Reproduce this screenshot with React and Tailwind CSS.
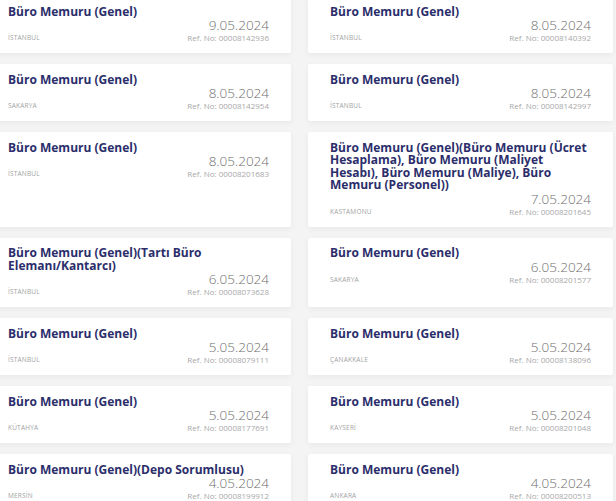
import React from 'react';

const ILANLAR = [
    { title: 'Büro Memuru (Genel)', city: 'İstanbul', date: '9.05.2024', ref: '00008142936' },
    { title: 'Büro Memuru (Genel)', city: 'İstanbul', date: '8.05.2024', ref: '00008140392' },
    { title: 'Büro Memuru (Genel)', city: 'Sakarya', date: '8.05.2024', ref: '00008142954' },
    { title: 'Büro Memuru (Genel)', city: 'İstanbul', date: '8.05.2024', ref: '00008142997' },
    { title: 'Büro Memuru (Genel)', city: 'İstanbul', date: '8.05.2024', ref: '00008201683' },
    { title: 'Büro Memuru (Genel)(Büro Memuru (Ücret Hesaplama), Büro Memuru (Maliyet Hesabı), Büro Memuru (Maliye), Büro Memuru (Personel))', city: 'Kastamonu', date: '7.05.2024', ref: '00008201645' },
    { title: 'Büro Memuru (Genel)(Tartı Büro Elemanı/Kantarcı)', city: 'İstanbul', date: '6.05.2024', ref: '00008073628' },
    { title: 'Büro Memuru (Genel)', city: 'Sakarya', date: '6.05.2024', ref: '00008201577' },
    { title: 'Büro Memuru (Genel)', city: 'İstanbul', date: '5.05.2024', ref: '00008079111' },
    { title: 'Büro Memuru (Genel)', city: 'Çanakkale', date: '5.05.2024', ref: '00008138096' },
    { title: 'Büro Memuru (Genel)', city: 'Kütahya', date: '5.05.2024', ref: '00008177691' },
    { title: 'Büro Memuru (Genel)', city: 'Kayseri', date: '5.05.2024', ref: '00008201048' },
    { title: 'Büro Memuru (Genel)(Depo Sorumlusu)', city: 'Mersin', date: '4.05.2024', ref: '00008199912' },
    { title: 'Büro Memuru (Genel)', city: 'Ankara', date: '4.05.2024', ref: '00008200513' },
];

function IlanCard({ ilan }) {
    return (
        <div className="bg-white rounded-[2px] shadow-[0_2px_6px_rgba(0,0,0,0.05)] pt-[9.5px] pb-[9px] px-[22px]">
            <h3 className="text-[12px] font-bold leading-[12.5px] text-[#2b2e6b]">{ilan.title}</h3>
            <div className="flex items-end justify-between">
                <span className="text-[6.5px] leading-[12px] uppercase text-[#a3a3a3] tracking-[0.2px]">{ilan.city.toLocaleUpperCase('tr-TR')}</span>
                <div className="text-right">
                    <p className="text-[13.5px] font-light leading-[14px] text-[#6e6e6e]">{ilan.date}</p>
                    <p className="text-[8px] leading-[12px] text-[#a8a8a8]">Ref. No: {ilan.ref}</p>
                </div>
            </div>
        </div>
    );
}

export default function App() {
    return (
        <div className="w-[616px] h-[501px] overflow-hidden bg-[#f4f4f4]" style={{ fontFamily: '"Open Sans", "Noto Sans", sans-serif' }}>
            <div className="-ml-[14px] -mt-[4px] grid grid-cols-[305px_305px] gap-x-[17px] gap-y-[11px]">
                {ILANLAR.map((ilan, i) => <IlanCard key={i} ilan={ilan} />)}
            </div>
        </div>
    );
}
